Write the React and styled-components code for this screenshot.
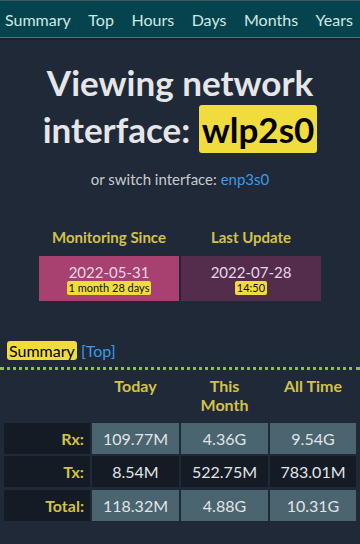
import styled, { createGlobalStyle } from 'styled-components';

const GlobalStyle = createGlobalStyle`
  html, body {
    margin: 0;
    padding: 0;
    background: #1f2937;
    font-family: Lato, "Open Sans", sans-serif;
    color: #e4e4e7;
  }
`

const navItems = ['Summary', 'Top', 'Hours', 'Days', 'Months', 'Years']

const rows = [
  { label: 'Rx:', values: ['109.77M', '4.36G', '9.54G'], light: true },
  { label: 'Tx:', values: ['8.54M', '522.75M', '783.01M'], light: false },
  { label: 'Total:', values: ['118.32M', '4.88G', '10.31G'], light: true },
]

const App = () => {
  return (
    <>
      <GlobalStyle />
      <Nav>
        {navItems.map((item) => (
          <NavLink key={item}>{item}</NavLink>
        ))}
      </Nav>

      <Title>
        Viewing network interface: <Mark>wlp2s0</Mark>
      </Title>
      <Switch>
        or switch interface: <Link>enp3s0</Link>
      </Switch>

      <InfoGrid>
        <InfoHead>Monitoring Since</InfoHead>
        <InfoHead>Last Update</InfoHead>
        <InfoBox $tone="#a8416f">
          2022-05-31
          <Badge>1 month 28 days</Badge>
        </InfoBox>
        <InfoBox $tone="#552d4c">
          2022-07-28
          <Badge>14:50</Badge>
        </InfoBox>
      </InfoGrid>

      <SectionTitle>
        <Mark $small>Summary</Mark> <Link>[Top]</Link>
      </SectionTitle>

      <Table>
        <Cell />
        <ColHead>Today</ColHead>
        <ColHead>This Month</ColHead>
        <ColHead>All Time</ColHead>
        {rows.map((row) => (
          <Row key={row.label}>
            <Label>{row.label}</Label>
            {row.values.map((v) => (
              <Value key={v} $light={row.light}>{v}</Value>
            ))}
          </Row>
        ))}
      </Table>
    </>
  )
};

export default App


const Nav = styled.nav`
  display: flex;
  flex-direction: row;
  align-items: center;
  justify-content: space-between;

  height: 36px;
  padding: 0 7px 0 5px;

  background-color: #05444f;
  border-top: 1px solid #3f5866;
  border-bottom: 1px solid #4e7479;
  box-shadow: 0 2px 0 #1a212d;
`
const NavLink = styled.a`
  font-size: 16px;
  color: #cfe8e1;
  cursor: pointer;
`
const Title = styled.h1`
  margin: 21px 0 0 0;

  font-size: 35px;
  font-weight: 700;
  line-height: 47px;
  text-align: center;
  color: #e6e6e8;
`
const Mark = styled.span`
  padding: ${(p) => (p.$small ? '0 2px' : '3px 3px')};
  border-radius: 3px;

  background-color: #f1dc3e;
  color: #000;
  font-size: ${(p) => (p.$small ? '16px' : 'inherit')};
  font-weight: ${(p) => (p.$small ? 400 : 700)};
`
const Switch = styled.p`
  margin: 17px 0 0 0;

  font-size: 15px;
  text-align: center;
  color: #c9cbd0;
`
const Link = styled.a`
  color: #3b9be6;
  cursor: pointer;
`
const InfoGrid = styled.div`
  display: grid;
  grid-template-columns: 140px 140px;
  column-gap: 2px;
  justify-content: center;

  margin-top: 40px;
`
const InfoHead = styled.div`
  padding-bottom: 10px;

  font-size: 15px;
  font-weight: 700;
  text-align: center;
  color: #d4c14a;
`
const InfoBox = styled.div`
  display: flex;
  flex-direction: column;
  align-items: center;

  height: 45px;
  padding-top: 7px;
  box-sizing: border-box;

  background-color: ${(p) => p.$tone};
  font-size: 15px;
  line-height: 18px;
  color: #e6d6ea;
`
const Badge = styled.span`
  padding: 0 2px;
  border-radius: 2px;

  background-color: #f1dc3e;
  color: #111;
  font-size: 11px;
  line-height: 14px;
`
const SectionTitle = styled.h2`
  margin: 40px 0 0 0;
  padding: 0 4px 6px 7px;

  font-size: 16px;
  font-weight: 400;
  line-height: 20px;
  color: #3b9be6;

  border-bottom: 3px dotted #8bc34a;
`
const Table = styled.div`
  display: grid;
  grid-template-columns: 86px 87px 87px 86px;
  gap: 2.5px 2px;

  margin-top: 6px;
  padding: 0 4px;
`
const Row = styled.div`
  display: contents;
`
const Cell = styled.div``
const ColHead = styled.div`
  padding: 0 6px 6px 6px;

  font-size: 16px;
  font-weight: 700;
  line-height: 19px;
  text-align: center;
  color: #d4c14a;
`
const Label = styled.div`
  display: flex;
  align-items: center;
  justify-content: flex-end;

  height: 31px;
  padding-right: 6px;

  background-color: #151b25;
  font-size: 16px;
  font-weight: 700;
  color: #d4c14a;
`
const Value = styled.div`
  display: flex;
  align-items: center;
  justify-content: center;

  height: 31px;

  background-color: ${(p) => (p.$light ? '#4a656f' : '#151b25')};
  font-size: 16px;
  color: #e1e4e6;
`
